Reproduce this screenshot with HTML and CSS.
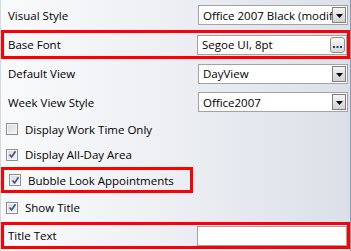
FILE: index.html
```html
<!DOCTYPE html>
<html>
<head>
<meta charset="utf-8">
<link rel="stylesheet" href="styles.css">
</head>
<body>
<div class="panel">
  <div class="row">
    <span class="label">Visual Style</span>
    <div class="combo"><span class="value">Office 2007 Black (modified)</span><span class="drop"><svg width="7" height="4" viewBox="0 0 7 4"><path d="M0 0H7L3.5 4Z" fill="#000"/></svg></span></div>
  </div>
  <div class="row hl">
    <span class="label">Base Font</span>
    <div class="combo"><span class="value">Segoe UI, 8pt</span><span class="dots"><svg width="9" height="3" viewBox="0 0 9 3"><rect x="0" y="0" width="2" height="2" fill="#2a3a6a"/><rect x="3.5" y="0" width="2" height="2" fill="#2a3a6a"/><rect x="7" y="0" width="2" height="2" fill="#2a3a6a"/></svg></span></div>
  </div>
  <div class="row">
    <span class="label">Default View</span>
    <div class="combo"><span class="value">DayView</span><span class="drop"><svg width="7" height="4" viewBox="0 0 7 4"><path d="M0 0H7L3.5 4Z" fill="#000"/></svg></span></div>
  </div>
  <div class="row">
    <span class="label">Week View Style</span>
    <div class="combo"><span class="value">Office2007</span><span class="drop"><svg width="7" height="4" viewBox="0 0 7 4"><path d="M0 0H7L3.5 4Z" fill="#000"/></svg></span></div>
  </div>
  <div class="row">
    <span class="check"></span><span class="clabel">Display Work Time Only</span>
  </div>
  <div class="row">
    <span class="check on"><svg width="9" height="9" viewBox="0 0 9 9"><path d="M1.5 4.5L3.6 7L7.5 1.2" fill="none" stroke="#3d4f8f" stroke-width="1.6"/></svg></span><span class="clabel">Display All-Day Area</span>
  </div>
  <div class="row hl short">
    <span class="check on"><svg width="9" height="9" viewBox="0 0 9 9"><path d="M1.5 4.5L3.6 7L7.5 1.2" fill="none" stroke="#3d4f8f" stroke-width="1.6"/></svg></span><span class="clabel">Bubble Look Appointments</span>
  </div>
  <div class="row">
    <span class="check on"><svg width="9" height="9" viewBox="0 0 9 9"><path d="M1.5 4.5L3.6 7L7.5 1.2" fill="none" stroke="#3d4f8f" stroke-width="1.6"/></svg></span><span class="clabel">Show Title</span>
  </div>
  <div class="row hl">
    <span class="label">Title Text</span>
    <div class="combo"></div>
  </div>
</div>
</body>
</html>
```
FILE: styles.css
```css
html, body {
  margin: 0;
  padding: 0;
}
body {
  width: 351px;
  height: 251px;
  overflow: hidden;
  font-family: "Open Sans", "Noto Sans", sans-serif;
  font-size: 11.5px;
  color: #000;
}
.panel {
  box-sizing: border-box;
  width: 351px;
  height: 251px;
  border-left: 1px solid #d4d8de;
  border-right: 1px solid #8d9bb0;
  background: linear-gradient(to right, #f9fafb 0%, #eef0f4 45%, #dbe0e8 100%);
  display: grid;
  grid-template-rows: 30px 29px 29px 28px 26px 25px 26px 29px 27px;
  align-content: start;
}
.row {
  box-sizing: border-box;
  display: flex;
  align-items: center;
  padding-left: 7px;
  padding-right: 2px;
}
.row.hl {
  border: 3px solid #ff0000;
  padding-left: 4px;
  padding-right: 0;
}
.row.short {
  width: 192px;
}
.label {
  flex: 1;
  white-space: nowrap;
}
.combo {
  box-sizing: border-box;
  width: 150px;
  height: 20px;
  border: 1px solid #a2a2a2;
  background: #fff;
  display: flex;
  align-items: center;
  padding-left: 4px;
  padding-right: 1px;
}
.value {
  flex: 1;
  overflow: hidden;
  white-space: nowrap;
}
.drop {
  box-sizing: border-box;
  width: 14px;
  height: 16px;
  border: 1px solid #7f7f7f;
  background: linear-gradient(#f4f4f4, #d2d2d2);
  display: flex;
  align-items: center;
  justify-content: center;
  padding-top: 2px;
}
.dots {
  box-sizing: border-box;
  width: 15px;
  height: 16px;
  border: 1px solid #8e8e8e;
  border-radius: 3px;
  background: linear-gradient(#f8f8f8, #d8d8d8);
  display: flex;
  align-items: flex-end;
  justify-content: center;
  padding-bottom: 3px;
}
.check {
  box-sizing: border-box;
  width: 12px;
  height: 12px;
  margin-left: -2px;
  margin-right: 7px;
  border: 1px solid #8f8f8f;
  background: linear-gradient(135deg, #d9d9d9, #f4f4f4);
  display: flex;
  align-items: center;
  justify-content: center;
  box-shadow: inset 0 0 0 1px #f6f6f6;
}
.row.hl .check {
  margin-left: 1px;
}
.clabel {
  white-space: nowrap;
}
```
